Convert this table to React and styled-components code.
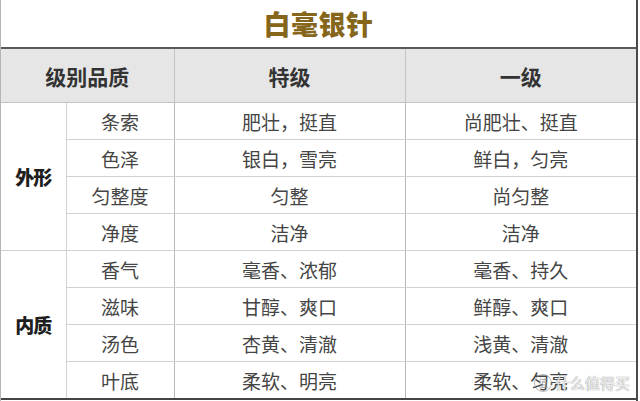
import React from 'react';
import styled, { createGlobalStyle } from 'styled-components';

const GlobalStyle = createGlobalStyle`
  html, body {
    margin: 0;
    padding: 0;
    background: #ffffff;
  }
  body {
    font-family: "Noto Sans CJK SC", "Noto Sans", sans-serif;
    width: 640px;
    height: 401px;
    overflow: hidden;
  }
`;

const Page = styled.div`
  position: relative;
  width: 638px;
  height: 401px;
  border-left: 1px solid #b5b5b5;
  border-right: 2px solid #4a4a4a;
  box-sizing: border-box;
  display: flex;
  flex-direction: column;
`;

const Title = styled.h1`
  margin: 0;
  height: 47px;
  flex: none;
  display: flex;
  align-items: center;
  justify-content: center;
  font-family: "Noto Sans CJK SC", sans-serif;
  font-weight: 900;
  font-size: 27px;
  letter-spacing: 0.5px;
  color: #86661b;
`;

const Table = styled.table`
  width: 100%;
  border-collapse: collapse;
  table-layout: fixed;
  border-top: 2px solid #5a5a5a;
  border-bottom: 2px solid #444444;
`;

const HeadCell = styled.th`
  height: 53px;
  padding: 0;
  background: #e6e6e6;
  border-bottom: 1px solid #c4c4c4;
  border-left: 1px solid #c4c4c4;
  font-weight: 700;
  font-size: 21px;
  color: #333333;
  text-align: center;
  vertical-align: middle;
  &:first-child {
    border-left: none;
  }
`;

const GroupCell = styled.td`
  padding: 0;
  border-bottom: 1px solid #cfcfcf;
  font-weight: 900;
  font-size: 19px;
  color: #1e1e1e;
  text-align: center;
  vertical-align: middle;
  letter-spacing: -1px;
`;

const Cell = styled.td`
  height: 36px;
  padding: 0;
  border-bottom: 1px solid #d2d2d2;
  border-left: 1px solid ${p => (p.$strong ? '#b8b8b8' : '#d2d2d2')};
  font-size: 19px;
  font-weight: 400;
  color: #454545;
  text-align: center;
  vertical-align: middle;
  white-space: nowrap;
`;

const Watermark = styled.div`
  position: absolute;
  right: 6px;
  bottom: 8px;
  display: flex;
  align-items: center;
  gap: 3px;
  font-size: 15px;
  color: rgba(255, 255, 255, 0.85);
  text-shadow: 0 0 1px rgba(120, 120, 120, 0.7), 0 0 1px rgba(120, 120, 120, 0.7);
  pointer-events: none;
`;

const Badge = styled.span`
  width: 16px;
  height: 16px;
  border-radius: 50%;
  border: 1px solid rgba(140, 140, 140, 0.6);
  display: flex;
  align-items: center;
  justify-content: center;
  font-size: 10px;
  color: rgba(140, 140, 140, 0.8);
  text-shadow: none;
`;

const groups = [
  {
    name: '外形',
    rows: [
      ['条索', '肥壮，挺直', '尚肥壮、挺直'],
      ['色泽', '银白，雪亮', '鲜白，匀亮'],
      ['匀整度', '匀整', '尚匀整'],
      ['净度', '洁净', '洁净'],
    ],
  },
  {
    name: '内质',
    rows: [
      ['香气', '毫香、浓郁', '毫香、持久'],
      ['滋味', '甘醇、爽口', '鲜醇、爽口'],
      ['汤色', '杏黄、清澈', '浅黄、清澈'],
      ['叶底', '柔软、明亮', '柔软、匀亮'],
    ],
  },
];

export default function App() {
  return (
    <>
      <GlobalStyle />
      <Page>
        <Title>白毫银针</Title>
        <Table>
          <colgroup>
            <col style={{ width: 65 }} />
            <col style={{ width: 108 }} />
            <col style={{ width: 231 }} />
            <col />
          </colgroup>
          <thead>
            <tr>
              <HeadCell colSpan={2}>级别品质</HeadCell>
              <HeadCell>特级</HeadCell>
              <HeadCell>一级</HeadCell>
            </tr>
          </thead>
          <tbody>
            {groups.map(g =>
              g.rows.map((r, i) => (
                <tr key={g.name + r[0]}>
                  {i === 0 && <GroupCell rowSpan={g.rows.length}>{g.name}</GroupCell>}
                  <Cell>{r[0]}</Cell>
                  <Cell $strong>{r[1]}</Cell>
                  <Cell $strong>{r[2]}</Cell>
                </tr>
              ))
            )}
          </tbody>
        </Table>
        <Watermark>
          <Badge>值</Badge>
          什么值得买
        </Watermark>
      </Page>
    </>
  );
}
